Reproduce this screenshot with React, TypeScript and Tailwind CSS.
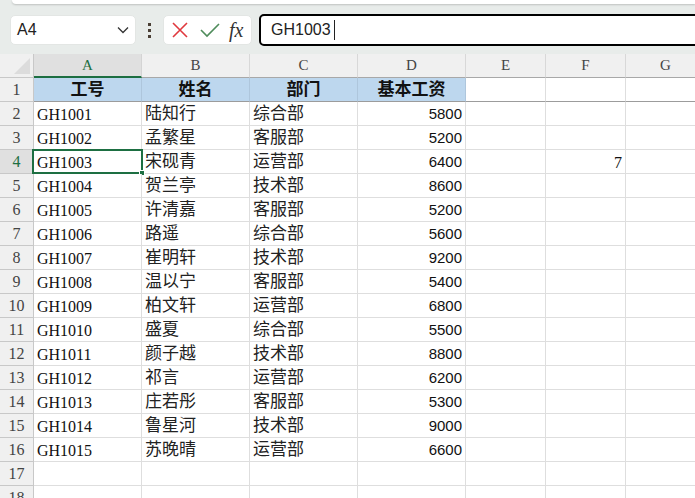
import React from 'react';

type Row = [string, string, string, string];

const rows: Row[] = [
  ['GH1001', '陆知行', '综合部', '5800'],
  ['GH1002', '孟繁星', '客服部', '5200'],
  ['GH1003', '宋砚青', '运营部', '6400'],
  ['GH1004', '贺兰亭', '技术部', '8600'],
  ['GH1005', '许清嘉', '客服部', '5200'],
  ['GH1006', '路遥', '综合部', '5600'],
  ['GH1007', '崔明轩', '技术部', '9200'],
  ['GH1008', '温以宁', '客服部', '5400'],
  ['GH1009', '柏文轩', '运营部', '6800'],
  ['GH1010', '盛夏', '综合部', '5500'],
  ['GH1011', '颜子越', '技术部', '8800'],
  ['GH1012', '祁言', '运营部', '6200'],
  ['GH1013', '庄若彤', '客服部', '5300'],
  ['GH1014', '鲁星河', '技术部', '9000'],
  ['GH1015', '苏晚晴', '运营部', '6600'],
];

const cols = [
  { key: 'A', w: 'w-[108px]' },
  { key: 'B', w: 'w-[108px]' },
  { key: 'C', w: 'w-[108px]' },
  { key: 'D', w: 'w-[108px]' },
  { key: 'E', w: 'w-[80px]' },
  { key: 'F', w: 'w-[80px]' },
  { key: 'G', w: 'w-[80px]' },
];

function FormulaBar() {
  return (
    <div className="flex items-center h-[32px] mt-[10px]">
      <div className="ml-[10px] w-[126px] h-[30px] shrink-0 bg-white rounded-[5px] border border-[#e3e6e4] flex items-center justify-between pl-[6px] pr-[6px]">
        <span className="font-['Liberation_Sans',sans-serif] text-[16px] text-[#222]">A4</span>
        <svg width="12" height="8" viewBox="0 0 12 8">
          <path d="M1 1.5 L6 6.5 L11 1.5" fill="none" stroke="#333" strokeWidth="1.3" />
        </svg>
      </div>
      <div className="w-[27px] shrink-0 flex flex-col items-center gap-[3px]">
        <span className="w-[3px] h-[3px] bg-[#4a3f35]" />
        <span className="w-[3px] h-[3px] bg-[#4a3f35]" />
        <span className="w-[3px] h-[3px] bg-[#4a3f35]" />
      </div>
      <div className="w-[89px] h-[30px] shrink-0 bg-white rounded-[5px] border border-[#e3e6e4] flex items-center pl-[7px]">
        <svg width="18" height="18" viewBox="0 0 18 18">
          <path d="M2 2 L16 16 M16 2 L2 16" stroke="#e0393e" strokeWidth="1.6" fill="none" />
        </svg>
        <svg width="22" height="18" viewBox="0 0 22 18" className="ml-[10px]">
          <path d="M2 9 L8 15 L20 3" stroke="#4f8c5b" strokeWidth="1.6" fill="none" />
        </svg>
        <span className="ml-[8px] font-['Liberation_Serif',serif] italic text-[20px] text-[#333] leading-none">fx</span>
      </div>
      <div className="ml-[7px] w-[460px] h-[32px] shrink-0 bg-white border-2 border-black rounded-[5px] flex items-center pl-[10px]">
        <span className="font-['Liberation_Sans',sans-serif] text-[16px] text-[#222]">GH1003</span>
        <span className="ml-[3px] w-[1px] h-[20px] bg-[#222]" />
      </div>
    </div>
  );
}

function HeaderRow() {
  return (
    <div className="flex h-[24px]">
      <div className="w-[34px] shrink-0 h-full bg-[#f0f0f0] border-r border-b border-[#c8c8c8] relative">
        <div className="absolute right-[3px] bottom-[3px] w-0 h-0 border-l-[16px] border-l-transparent border-b-[16px] border-b-[#dcdcdc]" />
      </div>
      {cols.map((c) =>
        c.key === 'A' ? (
          <div
            key={c.key}
            className={`${c.w} shrink-0 h-full bg-[#e0e0e0] border-r border-[#d4d4d4] border-b-2 border-b-[#1d6f42] flex items-center justify-center text-[15px] text-[#1d6f42]`}
          >
            {c.key}
          </div>
        ) : (
          <div
            key={c.key}
            className={`${c.w} shrink-0 h-full bg-[#f0f0f0] border-r border-[#d8d8d8] border-b border-b-[#a8a8a8] flex items-center justify-center text-[15px] text-[#444]`}
          >
            {c.key}
          </div>
        )
      )}
    </div>
  );
}

function RowHeader({ n, active }: { n: number; active?: boolean }) {
  return (
    <div
      className={`w-[34px] shrink-0 h-full border-r border-b border-[#c8c8c8] flex items-center justify-center text-[16px] pt-[1px] ${
        active ? 'bg-[#e0e0e0] text-[#1d6f42]' : 'bg-[#f0f0f0] text-[#444]'
      }`}
    >
      {n}
    </div>
  );
}

function TitleRow() {
  const titles = ['工号', '姓名', '部门', '基本工资'];
  return (
    <div className="flex h-[24px]">
      <RowHeader n={1} />
      {titles.map((t, i) => (
        <div
          key={i}
          className={`${cols[i].w} shrink-0 h-full bg-[#bdd7ee] border-r border-[#aec6dc] border-b border-b-[#9c9c9c] flex items-center justify-center text-[17px] font-bold text-[#111]`}
        >
          {t}
        </div>
      ))}
      {cols.slice(4).map((c) => (
        <div key={c.key} className={`${c.w} shrink-0 h-full bg-white border-r border-[#dedede] border-b border-b-[#9c9c9c]`} />
      ))}
    </div>
  );
}

function DataRow({ n, row }: { n: number; row?: Row }) {
  const active = n === 4;
  return (
    <div className="flex h-[24px]">
      <RowHeader n={n} active={active} />
      <div className={`${cols[0].w} shrink-0 h-full bg-white border-r border-b border-[#dedede] flex items-center pl-[3px] pt-[2px] text-[16px] text-[#111] relative`}>
        {row?.[0]}
        {active && (
          <div className="absolute -left-[2px] -top-[1px] w-[111px] h-[25px] border-2 border-[#1d6f42]">
            <div className="absolute -right-[4px] -bottom-[4px] w-[6px] h-[6px] bg-[#1d6f42] border border-white" />
          </div>
        )}
      </div>
      <div className={`${cols[1].w} shrink-0 h-full bg-white border-r border-b border-[#dedede] flex items-center pl-[3px] pt-[1px] text-[17px] text-[#222]`}>
        {row?.[1]}
      </div>
      <div className={`${cols[2].w} shrink-0 h-full bg-white border-r border-b border-[#dedede] flex items-center pl-[3px] pt-[1px] text-[17px] text-[#222]`}>
        {row?.[2]}
      </div>
      <div className={`${cols[3].w} shrink-0 h-full bg-white border-r border-b border-[#dedede] flex items-center justify-end pr-[3px] pt-[2px] font-['Liberation_Sans',sans-serif] text-[15px] text-[#111]`}>
        {row?.[3]}
      </div>
      <div className={`${cols[4].w} shrink-0 h-full bg-white border-r border-b border-[#dedede]`} />
      <div className={`${cols[5].w} shrink-0 h-full bg-white border-r border-b border-[#dedede] flex items-center justify-end pr-[3px] pt-[2px] text-[16px] text-[#111]`}>
        {active ? '7' : ''}
      </div>
      <div className={`${cols[6].w} shrink-0 h-full bg-white border-r border-b border-[#dedede]`} />
    </div>
  );
}

export default function App() {
  return (
    <div className="w-[695px] h-[498px] overflow-hidden bg-[#e8ecea] font-['Liberation_Serif','Noto_Sans_CJK_SC',serif]">
      <div className="h-[4px] ml-[12px] bg-white rounded-bl-[8px] shadow-[0_1px_2px_rgba(0,0,0,0.18)]" />
      <FormulaBar />
      <div className="h-[8px]" />
      <div className="w-[720px]">
        <HeaderRow />
        <TitleRow />
        {Array.from({ length: 17 }, (_, i) => (
          <DataRow key={i} n={i + 2} row={rows[i]} />
        ))}
      </div>
    </div>
  );
}
